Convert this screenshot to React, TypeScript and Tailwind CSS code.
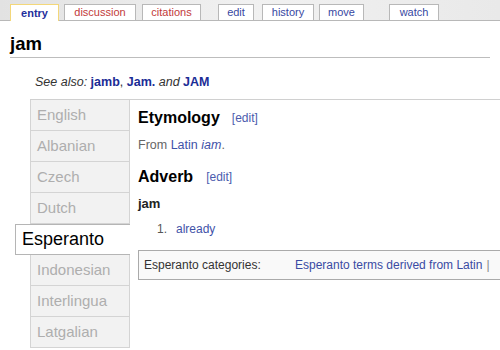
const tabs = [
  { label: "entry", w: "w-[49px]", ml: "ml-[10px]", kind: "active" },
  { label: "discussion", w: "w-[72px]", ml: "ml-[5px]", kind: "red" },
  { label: "citations", w: "w-[59px]", ml: "ml-[6px]", kind: "red" },
  { label: "edit", w: "w-[36px]", ml: "ml-[17px]", kind: "blue" },
  { label: "history", w: "w-[52px]", ml: "ml-[8px]", kind: "blue" },
  { label: "move", w: "w-[45px]", ml: "ml-[5px]", kind: "blue" },
  { label: "watch", w: "w-[50px]", ml: "ml-[25px]", kind: "blue" },
];

const languages = [
  "English",
  "Albanian",
  "Czech",
  "Dutch",
  "Esperanto",
  "Indonesian",
  "Interlingua",
  "Latgalian",
];

function Tab({ label, w, ml, kind }: { label: string; w: string; ml: string; kind: string }) {
  if (kind === "active") {
    return (
      <div
        className={`${w} ${ml} h-[17px] -mb-px flex items-center justify-center bg-white border-t border-l border-r border-[#f3d77a] text-[11px] font-bold text-[#1f2f9c]`}
      >
        {label}
      </div>
    );
  }
  return (
    <div
      className={`${w} ${ml} h-[16px] flex items-center justify-center bg-white border-t border-l border-r border-[#b8b8b8] text-[11px] ${
        kind === "red" ? "text-[#c23a3a]" : "text-[#3748a2]"
      }`}
    >
      {label}
    </div>
  );
}

export default function App() {
  return (
    <div className="w-[500px] h-[350px] overflow-hidden bg-white font-['Liberation_Sans',Arial,sans-serif] text-[#222]">
      {/* tab strip */}
      <div className="h-[21px] flex items-end border-b border-[#b8b8b8] bg-gradient-to-r from-[#e2e2e2] via-[#f1f1f1] to-[#e9e9e9]">
        {tabs.map((t) => (
          <Tab key={t.label} {...t} />
        ))}
      </div>

      {/* page title */}
      <h1 className="mx-[10px] mt-[12px] pb-[2px] text-[18.5px] leading-[22px] font-bold text-black border-b border-[#bdbdbd]">
        jam
      </h1>

      <p className="mt-[16px] pl-[35px] text-[12.5px] leading-[16px] text-[#333]">
        <i>See also:</i> <b className="text-[#1b2c96]">jamb</b>, <b className="text-[#1b2c96]">Jam.</b>{" "}
        <i>and</i> <b className="text-[#1b2c96]">JAM</b>
      </p>

      {/* languages + content */}
      <div className="mt-[9px] ml-[30px] flex border-t border-[#d0d0d0]">
        <div className="w-[100px] shrink-0 flex flex-col">
          {languages.map((lang) =>
            lang === "Esperanto" ? (
              <div
                key={lang}
                className="-ml-[15px] h-[31px] flex items-center pl-[6px] bg-white border-t border-l border-b border-[#b5b5b5] text-[18px] text-black"
              >
                {lang}
              </div>
            ) : (
              <div
                key={lang}
                className="h-[31px] flex items-center pl-[6px] bg-[#f2f2f2] border-l border-r border-b border-[#d4d4d4] text-[15px] text-[#aeaeae]"
              >
                {lang}
              </div>
            )
          )}
        </div>

        <div className="flex-1 min-w-0 pl-[8px] pt-[8px]">
          <div className="flex items-center h-[20px]">
            <span className="text-[16px] font-bold text-black">Etymology</span>
            <span className="ml-[12px] text-[12px] text-[#4b5cae]">[edit]</span>
          </div>
          <p className="mt-[9px] text-[12.5px] leading-[16px] text-[#666]">
            From <span className="text-[#3f52a8]">Latin</span> <i className="text-[#3f52a8]">iam</i>.
          </p>

          <div className="mt-[14px] flex items-center h-[20px]">
            <span className="text-[16px] font-bold text-black">Adverb</span>
            <span className="ml-[13px] text-[12px] text-[#4b5cae]">[edit]</span>
          </div>
          <p className="mt-[9px] text-[13px] leading-[16px] font-bold text-[#222]">jam</p>
          <div className="mt-[9px] flex text-[12px] leading-[16px]">
            <span className="ml-[19px] text-[#555]">1.</span>
            <span className="ml-[9px] text-[#3f52a8]">already</span>
          </div>

          <div className="mt-[13px] w-[420px] h-[30px] flex items-center bg-[#f9f9f9] border border-[#aaaaaa] text-[12px]">
            <span className="w-[156px] pl-[5px] text-[#333]">Esperanto categories:</span>
            <span className="text-[#3a4ba3]">Esperanto terms derived from Latin</span>
            <span className="ml-[4px] text-[#888]">|</span>
          </div>
        </div>
      </div>
    </div>
  );
}
